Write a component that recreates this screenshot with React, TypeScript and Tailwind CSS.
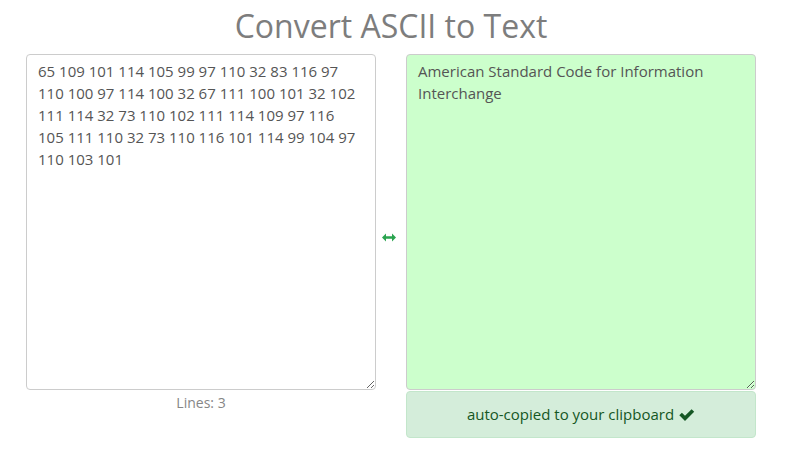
import React from "react";

export default function App() {
  const ascii =
    "65 109 101 114 105 99 97 110 32 83 116 97 110 100 97 114 100 32 67 111 100 101 32 102 111 114 32 73 110 102 111 114 109 97 116 105 111 110 32 73 110 116 101 114 99 104 97 110 103 101";
  return (
    <div className="w-[810px] h-[454px] bg-white overflow-hidden" style={{ fontFamily: '"Open Sans", sans-serif' }}>
      <div className="ml-[26px] w-[730px]">
        <h1 className="text-center text-[32px] leading-[52px] text-[#7d7d7d] font-normal">Convert ASCII to Text</h1>
        <div className="flex mt-[2px]">
          <div className="w-[350px] flex flex-col">
            <textarea
              className="w-[350px] h-[336px] border border-[#cccccc] rounded pl-[11px] pr-[16px] pt-[5px] pb-[6px] text-[15px] leading-[22px] text-[#555555] bg-white outline-none"
              defaultValue={ascii}
              style={{ fontFamily: '"Open Sans", sans-serif' }}
            />
            <div className="text-center text-[14px] leading-[22px] text-[#868686] mt-[2px]">Lines: 3</div>
          </div>
          <div className="w-[30px] flex items-center justify-center">
            <svg width="14" height="9" viewBox="0 0 14 9" className="mt-[-18px] mr-[4px]">
              <path d="M0 4.5 L4 0.5 L4 3.2 L10 3.2 L10 0.5 L14 4.5 L10 8.5 L10 5.8 L4 5.8 L4 8.5 Z" fill="#2aa44f" />
            </svg>
          </div>
          <div className="w-[350px] flex flex-col">
            <textarea
              className="w-[350px] h-[336px] border border-[#cccccc] rounded pl-[11px] pr-[16px] pt-[5px] pb-[6px] text-[15px] leading-[22px] text-[#555555] bg-[#ccffcc] outline-none"
              defaultValue="American Standard Code for Information Interchange"
              style={{ fontFamily: '"Open Sans", sans-serif' }}
            />
            <div className="h-[47px] mt-[1px] border border-[#c3e6cb] bg-[#d4edda] rounded text-[#155724] text-[15px] flex items-center justify-center gap-[5px]">
              <span>auto-copied to your clipboard</span>
              <svg width="16" height="12" viewBox="0 0 16 12" className="mt-[1px]">
                <path d="M0.3 6.3 L2.9 3.7 L6 6.8 L12.6 0.2 L15.2 2.8 L6 12 Z" fill="#155724" />
              </svg>
            </div>
          </div>
        </div>
      </div>
    </div>
  );
}
